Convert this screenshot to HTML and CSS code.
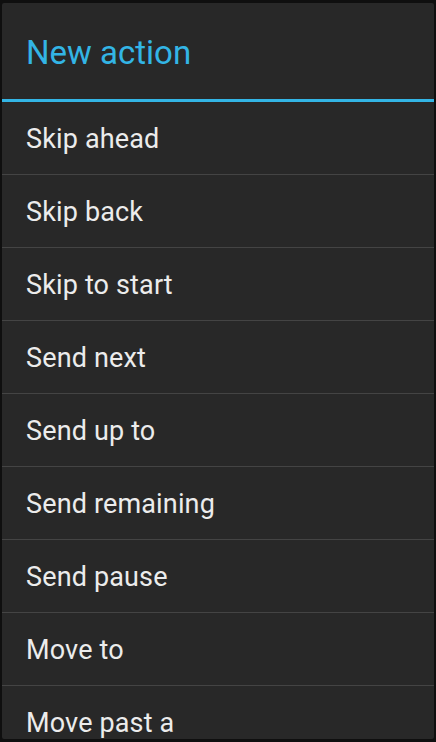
FILE: index.html
```html
<!DOCTYPE html>
<html>
<head>
<meta charset="utf-8">
<link rel="stylesheet" href="styles.css">
</head>
<body>
<div class="dialog">
  <div class="title">New action</div>
  <div class="rule"></div>
  <ul class="list">
    <li class="item">Skip ahead</li>
    <li class="item">Skip back</li>
    <li class="item">Skip to start</li>
    <li class="item">Send next</li>
    <li class="item">Send up to</li>
    <li class="item">Send remaining</li>
    <li class="item">Send pause</li>
    <li class="item">Move to</li>
    <li class="item">Move past a</li>
  </ul>
</div>
</body>
</html>
```
FILE: styles.css
```css
html, body {
  margin: 0;
  padding: 0;
  height: 100%;
  overflow: hidden;
}
body {
  background: #0f0f0f;
  font-family: Roboto, "Liberation Sans", sans-serif;
  padding: 3px 2px;
  box-sizing: border-box;
}
.dialog {
  background: #282828;
  height: 736px;
  border-radius: 2px;
  overflow: hidden;
}
.title {
  color: #33b5e5;
  font-size: 33px;
  height: 96px;
  line-height: 92px;
  padding-left: 24px;
  padding-top: 4px;
  box-sizing: border-box;
}
.rule {
  height: 3px;
  background: #33b5e5;
}
.list {
  list-style: none;
  margin: 0;
  padding: 0;
}
.item {
  height: 73px;
  line-height: 70px;
  padding-top: 2px;
  box-sizing: border-box;
  padding-left: 24px;
  font-size: 27px;
  letter-spacing: 0.15px;
  color: #ececec;
  border-bottom: 1px solid #444444;
}
```
